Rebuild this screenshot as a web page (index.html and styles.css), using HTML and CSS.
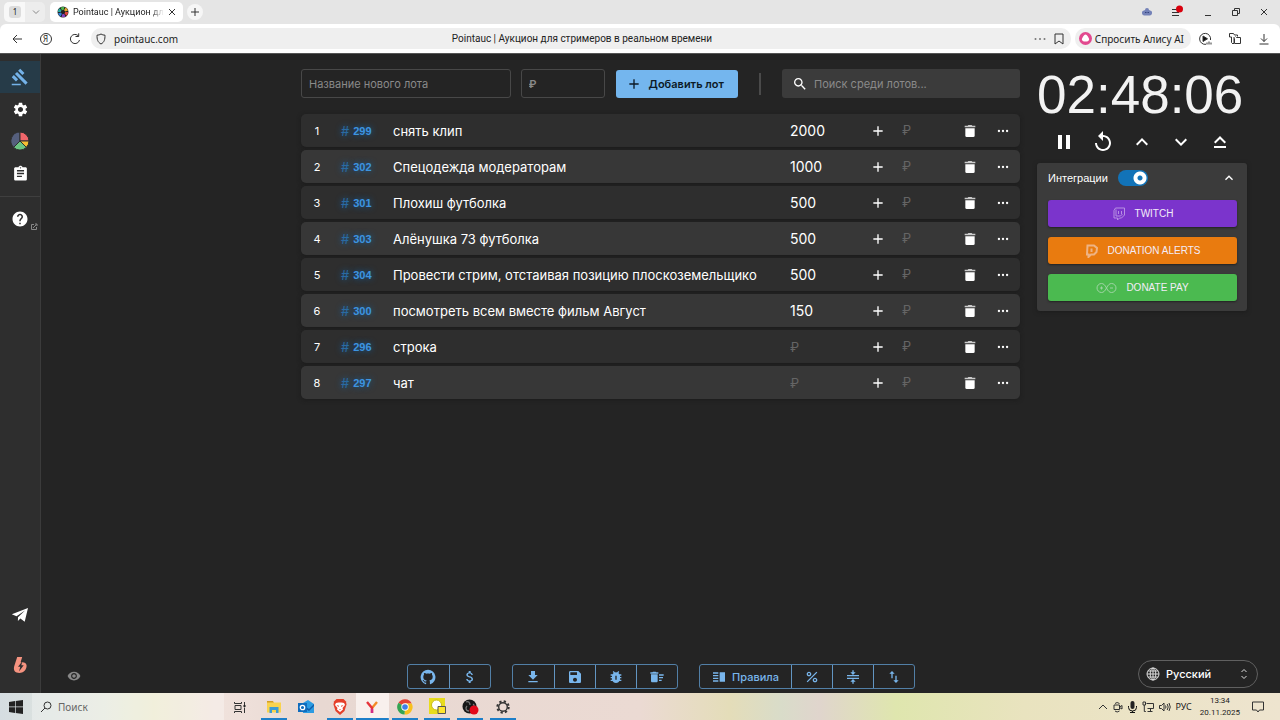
FILE: index.html
```html
<!DOCTYPE html>
<html lang="ru">
<head>
<meta charset="UTF-8">
<meta name="viewport" content="width=device-width, initial-scale=1.0">
<title>Pointauc | Аукцион для стримеров в реальном времени</title>
<link rel="stylesheet" href="styles.css">
</head>

<body>
<svg class="sprite" aria-hidden="true">
    <symbol id="add" viewBox="0 0 24 24"><path d="M19 13h-6v6h-2v-6H5v-2h6V5h2v6h6z"/></symbol>
    <symbol id="trash" viewBox="0 0 24 24"><path d="M5 8h14v11a2 2 0 0 1-2 2H7a2 2 0 0 1-2-2z"/><path opacity=".75" d="M4 4h4.500l1-1h5l1 1H20v2.500H4z"/></symbol>
    <symbol id="more" viewBox="0 0 24 24"><circle cx="5" cy="12" r="2"/><circle cx="12" cy="12" r="2"/><circle cx="19" cy="12" r="2"/></symbol>
    <symbol id="up" viewBox="0 0 24 24"><path d="m12 8-6 6 1.410 1.410L12 10.830l4.590 4.580L18 14z"/></symbol>
    <symbol id="down" viewBox="0 0 24 24"><path d="M16.590 8.590 12 13.170 7.410 8.590 6 10l6 6 6-6z"/></symbol>
    <symbol id="search" viewBox="0 0 24 24"><path d="M15.500 14h-.790l-.280-.270C15.410 12.590 16 11.110 16 9.500 16 5.910 13.090 3 9.500 3S3 5.910 3 9.500 5.910 16 9.500 16c1.610 0 3.090-.590 4.230-1.570l.270.280v.790l5 4.990L20.490 19zm-6 0C7.010 14 5 11.990 5 9.500S7.010 5 9.500 5 14 7.010 14 9.500 11.990 14 9.500 14z"/></symbol>
</svg>

<header class="browser">
    <div class="tabs">
        <div class="tab-group">
            <button class="tab-count">1</button>
            <button class="bare" aria-label="Группы"><svg class="line faint" width="10" height="10" viewBox="0 0 10 10"><path d="M2 3.500 5 6.500l3-3"/></svg></button>
        </div>
        <div class="tab">
            <svg width="12" height="12" viewBox="0 0 12 12">
                <circle cx="6" cy="6" r="5.500" fill="#222"/>
                <g fill="none" stroke-width="3" stroke-dasharray="2.800 30">
                    <circle cx="6" cy="6" r="3.600" stroke="#e0453c"/>
                    <circle cx="6" cy="6" r="3.600" stroke="#8a3fc0" transform="rotate(60 6 6)"/>
                    <circle cx="6" cy="6" r="3.600" stroke="#2d7fd8" transform="rotate(120 6 6)"/>
                    <circle cx="6" cy="6" r="3.600" stroke="#27a8a0" transform="rotate(180 6 6)"/>
                    <circle cx="6" cy="6" r="3.600" stroke="#4db84c" transform="rotate(240 6 6)"/>
                    <circle cx="6" cy="6" r="3.600" stroke="#e5a52d" transform="rotate(300 6 6)"/>
                </g>
            </svg>
            <span class="tab-title">Pointauc | Аукцион для</span>
            <button class="bare" aria-label="Закрыть вкладку"><svg class="line" width="8" height="8" viewBox="0 0 8 8"><path d="m1 1 6 6M7 1 1 7"/></svg></button>
        </div>
        <button class="new-tab" aria-label="Новая вкладка"><svg class="line" width="10" height="10" viewBox="0 0 10 10"><path d="M5 1v8M1 5h8"/></svg></button>
        <div class="window-buttons">
            <button class="bare" aria-label="Расширение"><svg width="10" height="10" viewBox="0 0 10 10"><path d="M3 3a2 2 0 0 1 4 0l1 .500a2.500 2.500 0 0 1-1 5H3a2.500 2.500 0 0 1-1-5z" fill="#7482b8"/><path d="M3 5.500h1.500M5.500 5.500H7" stroke="#34447e"/></svg></button>
            <button class="bare" aria-label="Меню"><svg class="line" width="14" height="14" viewBox="0 0 14 14"><path d="M2 4.500h5M2 7.500h7M2 10.500h7"/><circle cx="9.500" cy="4" r="3.500" fill="#d9000d" stroke="none"/></svg></button>
            <button class="bare" aria-label="Свернуть"><svg class="line" width="10" height="10" viewBox="0 0 10 10"><path d="M2 8.500h6"/></svg></button>
            <button class="bare" aria-label="Развернуть"><svg class="line" width="10" height="10" viewBox="0 0 10 10"><path d="M1.500 3.500h5v5h-5zM3.500 3.500v-2h5v5h-2"/></svg></button>
            <button class="bare" aria-label="Закрыть"><svg class="line" width="10" height="10" viewBox="0 0 10 10"><path d="m2 2 6 6M8 2 2 8"/></svg></button>
        </div>
    </div>
    <div class="address-bar">
        <button class="nav-button" aria-label="Назад"><svg class="line" width="12" height="12" viewBox="0 0 12 12"><path d="M11 6H2M6 2 2 6l4 4"/></svg></button>
        <button class="nav-button yandex" aria-label="Яндекс"><span>Я</span></button>
        <button class="nav-button" aria-label="Обновить"><svg class="line" width="12" height="12" viewBox="0 0 12 12"><path d="M9.500 3a4.600 4.600 0 1 0 1 4M6.500 3.500h3.200V.300"/></svg></button>
        <div class="address">
            <svg class="line" width="10" height="12" viewBox="0 0 10 12"><path d="M5 1c1.200.800 2.500 1.200 4 1.200 0 4-.500 7-4 8.800C1.500 9.200 1 6.200 1 2.200 2.500 2.200 3.800 1.800 5 1z"/></svg>
            <span class="url">pointauc.com</span>
            <span class="page-title">Pointauc | Аукцион для стримеров в реальном времени</span>
            <svg class="dots" width="12" height="12" viewBox="0 0 12 12"><circle cx="1.500" cy="6" r="1"/><circle cx="6" cy="6" r="1"/><circle cx="10.500" cy="6" r="1"/></svg>
            <svg class="line" width="10" height="12" viewBox="0 0 10 12"><path d="M1 1h8v10L5 8l-4 3z"/></svg>
        </div>
        <button class="alice">
            <svg width="13" height="13" viewBox="0 0 13 13"><circle cx="6.500" cy="6.500" r="6.500" fill="#e2498f"/><path d="M6.500 2.500c1.300 0 3.800 3.800 3.600 5.200-.200 1.300-2 1.800-3.600 1.800s-3.400-.500-3.600-1.800C2.700 6.300 5.200 2.500 6.500 2.500z" fill="#fff"/></svg>
            Спросить Алису AI
        </button>
        <div class="address-tools">
            <button class="bare" aria-label="Видео"><svg class="line" width="14" height="14" viewBox="0 0 14 14"><path d="M8 12.300A5.500 5.500 0 1 1 12.500 8"/><path d="M5 4v5.500L9.500 6.800z" fill="#111"/><path d="M9 12.500v-2M11 12.500v-3M13 12.500v-2"/></svg></button>
            <button class="bare" aria-label="Коллекции"><svg class="line" width="14" height="14" viewBox="0 0 14 14"><path d="M1.500 1.500h4l1 1.500h3v1.500M1.500 1.500v3.500h2v5.500l1.500 1.500 1-1V5M6.500 6.500v5h6v-6h-4l-1-1"/></svg></button>
            <button class="bare" aria-label="Загрузки"><svg class="line" width="12" height="12" viewBox="0 0 12 12"><path d="M6 1v7.500M3 5.500l3 3 3-3M1.500 11h9"/></svg></button>
        </div>
    </div>
</header>

<div class="app">
    <nav class="sidebar">
        <a class="side-link active" href="#" aria-label="Аукцион"><svg width="18" height="18" viewBox="0 0 24 24"><path d="M1 21h12v2H1zM5.245 8.070l2.830-2.827 14.140 14.142-2.828 2.828zM12.317 1l5.657 5.656-2.830 2.830-5.654-5.660zM3.825 9.485l5.657 5.657-2.828 2.828-5.657-5.657z"/></svg></a>
        <a class="side-link" href="#" aria-label="Настройки"><svg width="17" height="17" viewBox="0 0 24 24"><path d="M19.140 12.940c.040-.300.060-.610.060-.940 0-.320-.020-.640-.070-.940l2.030-1.580c.180-.140.230-.410.120-.610l-1.920-3.320c-.120-.220-.370-.290-.590-.220l-2.390.960c-.500-.380-1.030-.700-1.620-.940l-.360-2.540c-.040-.240-.240-.410-.480-.410h-3.840c-.240 0-.430.170-.470.410l-.360 2.540c-.590.240-1.130.570-1.620.940l-2.390-.960c-.220-.080-.470 0-.590.220L2.740 8.870c-.120.210-.080.470.120.610l2.030 1.580c-.050.300-.090.630-.090.940s.020.640.070.940l-2.030 1.580c-.180.140-.230.410-.120.610l1.920 3.320c.120.220.370.290.590.220l2.390-.960c.500.380 1.030.700 1.620.940l.360 2.540c.050.240.240.410.480.410h3.840c.240 0 .440-.170.470-.410l.360-2.540c.590-.240 1.130-.560 1.620-.940l2.390.960c.220.080.470 0 .590-.220l1.920-3.320c.120-.220.070-.470-.120-.610zM12 15.600c-1.980 0-3.600-1.620-3.600-3.600s1.620-3.600 3.600-3.600 3.600 1.620 3.600 3.600-1.620 3.600-3.600 3.600z"/></svg></a>
        <a class="side-link" href="#" aria-label="Колесо"><svg width="20" height="20" viewBox="0 0 20 20" stroke="#2e2e2e"><path fill="#555f7d" d="M10 10V1a9 9 0 0 0-6.400 15.400z"/><path fill="#f0666a" d="M10 10V1a9 9 0 0 1 9 9z"/><path fill="#f5bd33" d="M10 10h9a9 9 0 0 1-2.600 6.400z"/><path fill="#6cc584" d="m10 10 6.400 6.400a9 9 0 0 1-12.800 0z"/></svg></a>
        <a class="side-link" href="#" aria-label="История"><svg width="17" height="17" viewBox="0 0 24 24"><path d="M19 3h-4.180C14.400 1.840 13.300 1 12 1c-1.300 0-2.400.840-2.820 2H5c-1.100 0-2 .900-2 2v15c0 1.100.900 2 2 2h14c1.100 0 2-.900 2-2V5c0-1.100-.900-2-2-2zm-7 0c.550 0 1 .450 1 1s-.450 1-1 1-1-.450-1-1 .450-1 1-1zm2 14H7v-2h7v2zm3-4H7v-2h10v2zm0-4H7V7h10v2z"/></svg></a>
        <hr class="side-line">
        <a class="side-link" href="#" aria-label="Помощь">
            <svg width="18" height="18" viewBox="0 0 24 24"><path d="M12 2C6.480 2 2 6.480 2 12s4.480 10 10 10 10-4.480 10-10S17.520 2 12 2zm1 17h-2v-2h2v2zm2.070-7.750-.900.920C13.450 12.900 13 13.500 13 15h-2v-.500c0-1.100.450-2.100 1.170-2.830l1.240-1.260c.370-.360.590-.860.590-1.410 0-1.100-.900-2-2-2s-2 .900-2 2H8c0-2.210 1.790-4 4-4s4 1.790 4 4c0 .880-.360 1.680-.930 2.250z"/></svg>
            <svg class="external" width="8" height="8" viewBox="0 0 8 8"><path d="M4 1.500H1.500v5h5V4M3 5l3.500-3.500M5 1h2v2"/></svg>
        </a>
        <div class="side-bottom">
            <a class="side-link" href="#" aria-label="Telegram"><svg width="18" height="18" viewBox="0 0 18 18"><path d="M17 2 .800 8.300l4.700 1.900L14 4.500l-7 6.700-.100 3.800 2.500-2.500 4.300 3.200z"/></svg></a>
            <a class="side-link" href="#" aria-label="Boosty"><svg width="16" height="18" viewBox="0 0 16 18"><path fill="#f59380" d="M5.200 1h5L8.600 6.300h2.200c3 .200 4.300 2 3.700 4.800-.800 3.700-3.300 5.900-7 5.900-4.500 0-6.400-2.500-5.300-6.700z"/><path fill="#2e2e2e" d="M10.500 5 6 10.700h2.300L7 15.500l4.700-6.300H9.300z"/></svg></a>
        </div>
    </nav>

    <main class="page">
        <div class="auction">
            <section class="lots">
                <form class="new-lot">
                    <input class="field lot-name" type="text" placeholder="Название нового лота" aria-label="Название нового лота">
                    <input class="field lot-price" type="text" placeholder="₽" aria-label="Сумма">
                    <button class="add-lot" type="button"><svg width="16" height="16"><use href="#add"/></svg>Добавить лот</button>
                    <span class="divider"></span>
                    <label class="search">
                        <svg width="16" height="16"><use href="#search"/></svg>
                        <input type="text" placeholder="Поиск среди лотов..." aria-label="Поиск среди лотов">
                    </label>
                </form>
                <ol class="lot-list" id="lot-list"></ol>
            </section>

            <aside class="tools">
                <div class="timer">02:48:06</div>
                <div class="timer-buttons">
                    <button class="bare" aria-label="Пауза"><svg width="24" height="24" viewBox="0 0 24 24"><path d="M6 19h4V5H6v14zm8-14v14h4V5h-4z"/></svg></button>
                    <button class="bare" aria-label="Сбросить"><svg width="24" height="24" viewBox="0 0 24 24"><path d="M12 5V1L7 6l5 5V7c3.310 0 6 2.690 6 6s-2.690 6-6 6-6-2.690-6-6H4c0 4.420 3.580 8 8 8s8-3.580 8-8-3.580-8-8-8z"/></svg></button>
                    <button class="bare" aria-label="Добавить минуту"><svg width="24" height="24"><use href="#up"/></svg></button>
                    <button class="bare" aria-label="Убавить минуту"><svg width="24" height="24"><use href="#down"/></svg></button>
                    <button class="bare" aria-label="Добавить две минуты"><svg width="24" height="24" viewBox="0 0 24 24"><path d="m12 6-6 6 1.400 1.400L12 8.900l4.600 4.500L18 12zM6 16h12v2H6z"/></svg></button>
                </div>
                <div class="integrations">
                    <div class="integrations-head">
                        <label for="integrations">Интеграции</label>
                        <input class="switch" type="checkbox" id="integrations" checked>
                        <button class="bare" aria-label="Скрыть"><svg width="16" height="16"><use href="#up"/></svg></button>
                    </div>
                    <button class="service twitch">
                        <svg width="14" height="14" viewBox="0 0 14 14"><path d="M3.500 1h9v7l-3 3h-2l-2 2v-2H2V3.500zM6.500 4v3M9.500 4v3M4 9h4.500l2-2M4 2.500v6.500"/></svg>TWITCH
                    </button>
                    <button class="service alerts">
                        <svg width="14" height="14" viewBox="0 0 14 14"><path d="M2.500 1.500H9l3 2.500-.500 4-2.500 2.500H6L3.500 13v-2.500H2zM6.500 4.500v3.500"/></svg>DONATION ALERTS
                    </button>
                    <button class="service pay">
                        <svg width="21" height="12" viewBox="0 0 21 12"><path d="M10.500 6C9 3 7.500 1.500 5.500 1.500a4.500 4.500 0 0 0 0 9C7.500 10.500 9 9 10.500 6s3-4.500 5-4.500a4.500 4.500 0 0 1 0 9C13.500 10.500 12 9 10.500 6M4 6h3M5.500 4.500v3M14 6h3"/></svg>DONATE PAY
                    </button>
                </div>
            </aside>
        </div>

        <footer class="bottom">
            <button class="bare eye" aria-label="Показать"><svg width="14" height="14" viewBox="0 0 24 24"><path d="M12 4.500C7 4.500 2.730 7.610 1 12c1.730 4.390 6 7.500 11 7.500s9.270-3.110 11-7.500c-1.730-4.390-6-7.500-11-7.500zM12 17c-2.760 0-5-2.240-5-5s2.240-5 5-5 5 2.240 5 5-2.240 5-5 5zm0-8c-1.660 0-3 1.340-3 3s1.340 3 3 3 3-1.340 3-3-1.340-3-3-3z"/></svg></button>
            <div class="groups">
                <div class="group">
                    <button aria-label="GitHub"><svg width="16" height="16" viewBox="0 0 24 24"><path d="M12 1.270a11 11 0 0 0-3.480 21.460c.550.090.730-.280.730-.550v-1.840c-3.030.640-3.670-1.460-3.670-1.460-.550-1.290-1.280-1.650-1.280-1.650-.920-.650.100-.650.100-.650 1.100 0 1.730 1.100 1.730 1.100.920 1.650 2.570 1.200 3.210.920a2 2 0 0 1 .640-1.470c-2.470-.270-5.040-1.190-5.040-5.500 0-1.100.460-2.100 1.200-2.840a3.760 3.760 0 0 1 0-2.930s.910-.280 3.110 1.100c1.800-.490 3.700-.490 5.500 0 2.100-1.380 3.020-1.100 3.020-1.100a3.760 3.760 0 0 1 .100 2.930c.830.740 1.200 1.740 1.200 2.940 0 4.210-2.570 5.130-5.040 5.400.450.370.820.920.820 2.020v3.030c0 .270.100.640.730.550A11 11 0 0 0 12 1.270"/></svg></button>
                    <button aria-label="Поддержать"><svg width="16" height="16" viewBox="0 0 24 24"><path d="M11.800 10.900c-2.270-.590-3-1.200-3-2.150 0-1.090 1.010-1.850 2.700-1.850 1.780 0 2.440.850 2.500 2.100h2.210c-.070-1.720-1.120-3.300-3.210-3.810V3h-3v2.160c-1.940.420-3.500 1.680-3.500 3.610 0 2.310 1.910 3.460 4.700 4.130 2.500.600 3 1.480 3 2.410 0 .690-.490 1.790-2.700 1.790-2.060 0-2.870-.920-2.980-2.100h-2.200c.120 2.190 1.760 3.420 3.680 3.830V21h3v-2.150c1.950-.370 3.500-1.500 3.500-3.550 0-2.840-2.430-3.810-4.700-4.400z"/></svg></button>
                </div>
                <div class="group">
                    <button aria-label="Скачать"><svg width="16" height="16" viewBox="0 0 24 24"><path d="M19 9h-4V3H9v6H5l7 7zM5 18v2h14v-2z"/></svg></button>
                    <button aria-label="Сохранить"><svg width="16" height="16" viewBox="0 0 24 24"><path d="M17 3H5c-1.110 0-2 .900-2 2v14c0 1.100.890 2 2 2h14c1.100 0 2-.900 2-2V7zm-5 16c-1.660 0-3-1.340-3-3s1.340-3 3-3 3 1.340 3 3-1.340 3-3 3zm3-10H5V5h10z"/></svg></button>
                    <button aria-label="Ошибка"><svg width="16" height="16" viewBox="0 0 24 24"><path d="M20 8h-2.810c-.450-.780-1.070-1.450-1.820-1.960L17 4.410 15.590 3l-2.170 2.170C12.960 5.060 12.490 5 12 5s-.960.060-1.410.170L8.410 3 7 4.410l1.620 1.630C7.880 6.550 7.260 7.220 6.810 8H4v2h2.090c-.050.330-.090.660-.090 1v1H4v2h2v1c0 .340.040.670.090 1H4v2h2.810c1.040 1.790 2.970 3 5.190 3s4.150-1.210 5.190-3H20v-2h-2.090c.050-.330.090-.660.090-1v-1h2v-2h-2v-1c0-.340-.040-.670-.090-1H20zm-7 8h-2v-6h2z"/></svg></button>
                    <button aria-label="Очистить"><svg width="16" height="16" viewBox="0 0 24 24"><path d="M15 16h4v2h-4zm0-8h7v2h-7zm0 4h6v2h-6zM3 18c0 1.100.900 2 2 2h6c1.100 0 2-.900 2-2V8H3zM14 5h-3l-1-1H6L5 5H2v2h12z"/></svg></button>
                </div>
                <div class="group">
                    <button class="rules"><svg width="16" height="16" viewBox="0 0 24 24"><path d="M3 15h8v-2H3zm0 4h8v-2H3zm0-8h8V9H3zm0-6v2h8V5zm10 0h8v14h-8z"/></svg>Правила</button>
                    <button aria-label="Проценты"><svg width="16" height="16" viewBox="0 0 24 24"><path d="M7.500 11C9.430 11 11 9.430 11 7.500S9.430 4 7.500 4 4 5.570 4 7.500 5.570 11 7.500 11zm0-5C8.330 6 9 6.670 9 7.500S8.330 9 7.500 9 6 8.330 6 7.500 6.670 6 7.500 6zM4 18.600 18.600 4 20 5.400 5.400 20zM16.500 13c-1.930 0-3.500 1.570-3.500 3.500s1.570 3.500 3.500 3.500 3.500-1.570 3.500-3.500-1.570-3.500-3.500-3.500zm0 5c-.830 0-1.500-.670-1.500-1.500s.670-1.500 1.500-1.500 1.500.670 1.500 1.500-.670 1.500-1.500 1.500z"/></svg></button>
                    <button aria-label="Сжать"><svg width="16" height="16" viewBox="0 0 24 24"><path d="M8 19h3v3h2v-3h3l-4-4zm8-14h-3V2h-2v3H8l4 4zM3 9v2h18V9zm0 4v2h18v-2z"/></svg></button>
                    <button aria-label="Сортировать"><svg width="16" height="16" viewBox="0 0 24 24"><path d="M9 3 5 6.990h3V14h2V6.990h3zm7 14.010V10h-2v7.010h-3L15 21l4-3.990z"/></svg></button>
                </div>
            </div>
            <label class="language">
                <svg class="globe" width="14" height="14" viewBox="0 0 14 14"><circle cx="7" cy="7" r="6"/><ellipse cx="7" cy="7" rx="2.800" ry="6"/><path d="M1 7h12M2 4h10M2 10h10M7 1v12"/></svg>
                <select aria-label="Язык"><option>Русский</option><option>English</option></select>
                <svg class="globe" width="8" height="12" viewBox="0 0 8 12"><path d="M1.500 4 4 1.500 6.500 4M1.500 8 4 10.500 6.500 8"/></svg>
            </label>
        </footer>
    </main>
</div>

<div class="taskbar">
    <button class="start" aria-label="Пуск"><svg width="14" height="14" viewBox="0 0 14 14"><path d="M0 2l6-1v5.500H0zM6.700.900 14 0v6.500H6.700zM0 7.300h6v5.600L0 12zM6.700 7.300H14V14l-7.300-1z"/></svg></button>
    <label class="task-search">
        <svg class="line" width="12" height="12" viewBox="0 0 12 12"><circle cx="7.500" cy="4.500" r="3.500"/><path d="M5 7 1 11"/></svg>
        <input type="text" placeholder="Поиск" aria-label="Поиск">
    </label>
    <button class="task-view" aria-label="Представление задач"><svg class="line" width="12" height="12" viewBox="0 0 12 12"><path d="M.500 1v1.500h7V1M1 4.500h6v4H1zM.500 12v-1.500h7V12M10.500 1v3M10.500 6.500V12"/><path d="M9.500 4h2v2h-2z" fill="#222" stroke="none"/></svg></button>
    <div class="task-apps">
        <button class="running" aria-label="Проводник"><svg width="16" height="16" viewBox="0 0 16 16"><path fill="#d39e27" d="M1 2h6l1 2H1z"/><path fill="#f9d34e" d="M1 3.500h14v10H1z"/><path fill="#3d9bd4" d="M3.500 8h9v6H10v-3H6v3H3.500z"/></svg></button>
        <button aria-label="Outlook"><svg width="17" height="16" viewBox="0 0 17 16"><path fill="#2b9be2" d="M5 4l5-3 6 4v9H5z"/><path fill="#125ca8" d="m5 6 6 4 5-5v2l-5 5-6-4z"/><path fill="#0f6cbd" d="M0 4h9v9H0z"/><circle cx="4.500" cy="8.500" r="2.200" fill="none" stroke="#fff" stroke-width="1.300"/></svg></button>
        <button class="running" aria-label="Brave"><svg width="14" height="16" viewBox="0 0 14 16"><path fill="#e5402a" d="M3.500 0h7L13 2.500l.500 3L11.500 12 7 16l-4.500-4L.500 5.500l.500-3z"/><path fill="#fff" d="m3 4 2.500-.500h3L11 4l1 2-2.500 3 .500 1.500L7 13l-3-2.500L4.500 9 2 6z"/><path fill="#e5402a" d="m3.500 6 2.500.800-.500 1.200zM10.500 6 8 6.800 8.500 8zM6 10h2l-1 1z"/></svg></button>
        <button class="running current" aria-label="Yandex"><svg class="hollow" width="14" height="14" viewBox="0 0 14 14" stroke-width="2.400"><path stroke="#f28a26" d="m12 2-5 6"/><path stroke="#e5343b" d="m2 2 5 6v5"/><path stroke="#cf2d86" d="M7 9v4"/></svg></button>
        <button class="running" aria-label="Chrome"><svg width="16" height="16" viewBox="0 0 16 16"><path fill="#e54335" d="M8 8 1.500 3.800a7.500 7.500 0 0 1 13.200.700H8z"/><path fill="#f8c01d" d="M8 8V4.500h6.700A7.500 7.500 0 0 1 7.500 15.500z"/><path fill="#33a452" d="m8 8-.500 7.500A7.500 7.500 0 0 1 1.500 3.800z"/><circle cx="8" cy="8" r="3.700" fill="#fff"/><circle cx="8" cy="8" r="2.800" fill="#3f7fe8"/></svg></button>
        <button class="running" aria-label="Яндекс Музыка"><svg width="17" height="17" viewBox="0 0 17 17"><path fill="#e8dc1d" d="M0 0h16v16H0z"/><circle cx="7.500" cy="7" r="5" fill="#fff" stroke="#c9bd18"/><path d="M9 8.500h7.500v7H9z" fill="#ffe62e" stroke="#555"/></svg></button>
        <button class="running" aria-label="OBS"><svg width="17" height="16" viewBox="0 0 17 16"><circle cx="7.500" cy="7.500" r="7" fill="#171717"/><path d="M4 3c2-1 4 0 4 3M11 5c2 1 1 4-2 4M7 12c-3 0-4-3-2-5" fill="none" stroke="#777" stroke-width="1.300"/><circle cx="12" cy="11" r="4.500" fill="#e3091a"/></svg></button>
        <button class="running" aria-label="Параметры"><svg class="hollow" width="14" height="14" viewBox="0 0 14 14" stroke="#333"><circle cx="7" cy="7" r="5.700" stroke-width="2" stroke-dasharray="2.240 2.240"/><circle cx="7" cy="7" r="4.300" stroke-width="1.400"/></svg></button>
    </div>
    <div class="tray">
        <svg class="line" width="10" height="10" viewBox="0 0 10 10"><path d="m1 7 4-4 4 4"/></svg>
        <svg class="line" width="10" height="12" viewBox="0 0 10 12"><path d="M1 4h5.500v4.500H1zM6.500 6 9 4.500V8L6.500 6.500M2 2.500q2-2 4.500 0M2 10q2 2 4.500 0"/></svg>
        <svg width="9" height="12" viewBox="0 0 9 12"><rect x="2.500" width="4" height="8" rx="2"/><path d="M.500 5v1.500a4 3.500 0 0 0 8 0V5M4.500 10v2M2 11.500h5" fill="none" stroke="#111"/></svg>
        <svg class="line" width="12" height="12" viewBox="0 0 12 12"><path d="M4.500 2.500h7v5h-6M8.500 7.500v3M5.500 10.500h5M1 1h2.500v3H1zM2.300 4v6.500h1.500"/></svg>
        <svg class="line" width="12" height="12" viewBox="0 0 12 12"><path d="M.500 4.500h2L5 2v8L2.500 7.500h-2zM6.500 4.500q1 1.500 0 3M8.200 3q2 3 0 6M10 2q2.500 4 0 8"/></svg>
        <span class="layout">РУС</span>
        <div class="clock"><span>13:34</span><span>20.11.2025</span></div>
        <button class="bare" aria-label="Уведомления"><svg class="line" width="12" height="12" viewBox="0 0 12 12"><path d="M.500 1h11v8h-4L6 11 4.500 9h-4z"/></svg></button>
    </div>
</div>

<script>
    const lots = [
        { id: 299, name: 'снять клип', amount: 2000 },
        { id: 302, name: 'Спецодежда модераторам', amount: 1000 },
        { id: 301, name: 'Плохиш футболка', amount: 500 },
        { id: 303, name: 'Алёнушка 73 футболка', amount: 500 },
        { id: 304, name: 'Провести стрим, отстаивая позицию плоскоземельщиков', amount: 500 },
        { id: 300, name: 'посмотреть всем вместе фильм Август', amount: 150 },
        { id: 296, name: 'строка', amount: '' },
        { id: 297, name: 'чат', amount: '' }
    ];

    document.getElementById('lot-list').innerHTML = lots.map((lot, index) => `
        <li class="lot">
            <span class="position">${index + 1}</span>
            <span class="lot-id"><span class="hash">#</span>${lot.id}</span>
            <input class="name" type="text" value="${lot.name}" aria-label="Название лота">
            <input class="amount" type="text" value="${lot.amount}" placeholder="₽" aria-label="Сумма лота">
            <button class="bare plus" aria-label="Добавить"><svg width="16" height="16"><use href="#add"/></svg></button>
            <input class="extra" type="text" placeholder="₽" aria-label="Добавить к сумме">
            <button class="bare" aria-label="Удалить"><svg width="16" height="16"><use href="#trash"/></svg></button>
            <button class="bare" aria-label="Ещё"><svg width="14" height="14"><use href="#more"/></svg></button>
        </li>`).join('');
</script>

</body>
</html>
```
FILE: styles.css
```css
* {
    box-sizing: border-box;
}
body {
    margin: 0;
    min-height: 100vh;
    display: flex;
    flex-direction: column;
    background-color: #242424;
    color: #fff;
    font-family: Inter, "Liberation Sans", sans-serif;
    font-size: 11px;
}
button, input, select {
    font: inherit;
    color: inherit;
    margin: 0;
    padding: 0;
    border: none;
    background: none;
    min-width: 0;
}
svg {
    display: block;
    flex: none;
    fill: currentColor;
}
.sprite {
    position: absolute;
    width: 0;
    height: 0;
}
.hollow {
    fill: none;
}
.line {
    fill: none;
    stroke: #333;
}
.faint {
    stroke: #888;
}
.bare {
    display: flex;
    align-items: center;
    justify-content: center;
}

/* browser */
.browser {
    background-color: #e5e5e5;
    color: #222;
    font-family: "Noto Sans", sans-serif;
    font-size: 10px;
    border-bottom: 1px solid #555;
}
.tabs {
    display: flex;
    align-items: center;
    height: 24px;
    padding: 0 11px 0 4px;
}
.tab-group {
    display: flex;
    align-items: center;
    gap: 6px;
    width: 41px;
    height: 20px;
    padding-left: 5px;
    border-radius: 5px;
    background: linear-gradient(90deg, #f8f8f8 21px, #ededed 21px);
}
.tab-count {
    width: 12px;
    height: 12px;
    border-radius: 3px;
    background-color: #dcdcdc;
    font-size: 8px;
    line-height: 12px;
}
.tab-group .bare {
    width: 18px;
}
.tab {
    display: flex;
    align-items: center;
    gap: 4px;
    width: 133px;
    height: 20px;
    margin-left: 5px;
    padding: 0 7px;
    border-radius: 5px;
    background-color: #fff;
}
.tab-title {
    flex: 1;
    overflow: hidden;
    white-space: nowrap;
    font-family: Roboto, sans-serif;
    font-size: 9px;
    -webkit-mask-image: linear-gradient(90deg, #000 85%, transparent);
    mask-image: linear-gradient(90deg, #000 85%, transparent);
}
.new-tab {
    display: flex;
    align-items: center;
    justify-content: center;
    width: 16px;
    height: 16px;
    margin-left: 4px;
    border-radius: 50%;
    background-color: #f6f6f6;
}
.window-buttons, .address-tools {
    display: flex;
    justify-content: space-between;
    align-items: center;
}
.window-buttons {
    width: 127px;
    margin-left: auto;
}
.address-bar {
    display: flex;
    align-items: center;
    height: 29px;
    padding: 0 10px 0 2px;
    border-radius: 6px 6px 0 0;
    background-color: #fff;
}
.nav-button {
    display: flex;
    align-items: center;
    justify-content: center;
    width: 29px;
}
.yandex span {
    width: 12px;
    height: 12px;
    border: 1px solid #333;
    border-radius: 50%;
    font-size: 8px;
    line-height: 10px;
}
.address {
    display: flex;
    align-items: center;
    gap: 8px;
    flex: 1;
    height: 21px;
    margin-left: 2px;
    padding: 0 7px 0 5px;
    border-radius: 10px;
    background-color: #efefef;
}
.address .dots {
    fill: #777;
}
.page-title {
    flex: 1;
    text-align: center;
    padding-right: 48px;
    font-family: Roboto, sans-serif;
}
.alice {
    display: flex;
    align-items: center;
    gap: 3px;
    height: 21px;
    margin-left: 4px;
    padding: 0 7px 0 4px;
    border-radius: 10px;
    background-color: #efefef;
}
.address-tools {
    width: 72px;
    margin-left: 7px;
}

/* layout */
.app {
    flex: 1;
    display: flex;
}
.sidebar {
    display: flex;
    flex-direction: column;
    width: 41px;
    padding: 7px 0 12px;
    background-color: #2e2e2e;
    border-right: 1px solid #3b3b3b;
}
.side-link {
    position: relative;
    display: flex;
    align-items: center;
    justify-content: center;
    height: 32px;
    color: #fff;
}
.side-link.active {
    background-color: #263b48;
    color: #74b2e8;
}
.side-line {
    width: 100%;
    margin: 7px 0 6px;
    border: none;
    border-top: 1px solid #3f3f3f;
}
.external {
    position: absolute;
    right: 2px;
    bottom: 4px;
    fill: none;
    stroke: #888;
}
.side-bottom {
    display: flex;
    flex-direction: column;
    gap: 18px;
    margin-top: auto;
}
.page {
    flex: 1;
    display: flex;
    flex-direction: column;
    justify-content: space-between;
    min-width: 0;
}
.auction {
    display: grid;
    grid-template-columns: minmax(0, 1fr) 210px;
    gap: 17px;
    padding: 15px 33px 0 260px;
}

/* new lot */
.new-lot {
    display: flex;
    align-items: center;
}
.field {
    height: 29px;
    padding: 0 7px;
    border: 1px solid #484848;
    border-radius: 3px;
}
.field::placeholder, .search input::placeholder {
    color: #8a8a8a;
    opacity: 1;
}
.lot-name {
    flex: 1;
}
.lot-price {
    width: 84px;
    margin-left: 10px;
    font-weight: 600;
}
.add-lot {
    display: flex;
    align-items: center;
    gap: 7px;
    height: 28px;
    margin-left: 11px;
    padding: 0 14px 0 10px;
    border-radius: 3px;
    background-color: #74b6ee;
    color: #0c1a26;
    font-weight: 600;
}
.divider {
    width: 2px;
    height: 22px;
    margin: 0 21px;
    background-color: #4a4a4a;
}
.search {
    display: flex;
    align-items: center;
    gap: 6px;
    width: 238px;
    height: 29px;
    padding: 0 10px;
    border-radius: 3px;
    background-color: #3b3b3b;
}
.search input {
    flex: 1;
}

/* lots */
.lot-list {
    display: flex;
    flex-direction: column;
    gap: 3px;
    margin: 16px 0 0;
    padding: 0;
    list-style: none;
}
.lot {
    display: grid;
    grid-template-columns: 32px 60px minmax(0, 1fr) 73px 30px 59px 36px 30px;
    align-items: center;
    height: 33px;
    padding-right: 2px;
    border-radius: 5px;
    background-color: #2e2e2e;
    box-shadow: 0 1px 4px #1c1c1c;
}
.lot:nth-child(even) {
    background-color: #373737;
}
.position {
    text-align: center;
}
.lot-id {
    display: flex;
    align-items: center;
    gap: 4px;
    padding-left: 8px;
    font-family: "Liberation Sans", Arial, sans-serif;
    line-height: 14px;
    font-weight: bold;
    color: #3d94e0;
    text-shadow: 0 0 6px #1463a5;
}
.hash {
    font-family: Inter, sans-serif;
    font-size: 13px;
    font-weight: 400;
    color: #2a6ba3;
}
.name {
    margin-right: 33px;
    font-size: 13px;
}
.amount {
    font-size: 14px;
}
.amount::placeholder, .extra::placeholder {
    color: #656565;
    font-size: 13px;
    opacity: 1;
}
.extra {
    padding-left: 9px;
}

/* timer */
.timer {
    padding-bottom: 3px;
    font-family: "Liberation Sans", Arial, sans-serif;
    font-size: 53px;
    line-height: 51px;
    color: #f2f2f2;
}
.timer-buttons {
    display: flex;
    justify-content: space-around;
    padding: 7px 7px 9px;
}
.integrations {
    display: flex;
    flex-direction: column;
    gap: 10px;
    padding: 0 10px 10px 11px;
    border-radius: 3px;
    background-color: #3b3b3b;
    box-shadow: 0 1px 4px #1c1c1c;
    font-family: "Liberation Sans", Arial, sans-serif;
}
.integrations-head {
    display: flex;
    align-items: center;
    height: 30px;
    margin-bottom: -3px;
}
.integrations-head .bare {
    margin-left: auto;
}
.switch {
    appearance: none;
    width: 30px;
    height: 16px;
    margin-left: 10px;
    border-radius: 8px;
    background: radial-gradient(circle at 22px 8px, #1273b8 2px, #fff 3px, #fff 6px, #1273b8 7px);
}
.service {
    display: flex;
    align-items: center;
    justify-content: center;
    gap: 9px;
    height: 27px;
    border-radius: 3px;
    color: #f3ecf8;
    font-size: 10px;
    box-shadow: 0 1px 2px #222;
}
.service svg {
    fill: none;
    stroke: currentColor;
    opacity: 0.5;
}
.alerts svg {
    stroke-width: 2;
}
.twitch {
    background-color: #7b34cc;
}
.alerts {
    background-color: #e97b0f;
}
.pay {
    background-color: #4bba50;
}

/* bottom bar */
.bottom {
    display: grid;
    grid-template-columns: 1fr auto 1fr;
    align-items: end;
    padding: 0 22px 4px;
}
.eye {
    justify-self: start;
    margin-bottom: 2px;
    padding: 4px;
    color: #888;
}
.groups {
    display: flex;
    gap: 21px;
}
.group {
    display: flex;
    height: 25px;
    border: 1px solid #527fa6;
    border-radius: 3px;
    color: #79b6ec;
}
.group button {
    display: flex;
    align-items: center;
    justify-content: center;
    width: 41px;
}
.group button + button {
    border-left: 1px solid #6295c2;
}
.group .rules {
    gap: 5px;
    width: 91px;
    font-weight: 500;
}
.language {
    justify-self: end;
    display: flex;
    align-items: center;
    gap: 6px;
    width: 120px;
    height: 28px;
    margin-bottom: 1px;
    padding: 0 9px 0 7px;
    border: 1px solid #606060;
    border-radius: 14px;
    font-weight: 500;
}
.language select {
    appearance: none;
    flex: 1;
}
.globe {
    fill: none;
    stroke: #ddd;
}

/* taskbar */
.taskbar {
    display: flex;
    height: 27px;
    color: #222;
    font-family: "Noto Sans", sans-serif;
    background: linear-gradient(90deg, #d5dde1 0, #e3e7dc 8%, #ebe9cc 12%, #f0e2dc 17%, #e8d8d2 25%, #ebdad3 50%, #e4ddb9 57%, #d9dcc9 61%, #e0d5cd 64%, #dfe6ae 70%, #e9e3bf 80%, #eee4cf 100%);
}
.start {
    display: flex;
    align-items: center;
    justify-content: center;
    width: 32px;
}
.task-search {
    display: flex;
    align-items: center;
    gap: 6px;
    width: 192px;
    padding-left: 8px;
    background-color: rgba(255, 255, 255, 0.3);
}
.task-search input {
    width: 120px;
    font-size: 10px;
}
.task-search input::placeholder {
    color: #666;
}
.task-view {
    display: flex;
    align-items: center;
    justify-content: center;
    width: 32px;
}
.task-apps {
    display: flex;
    width: 261px;
    margin-left: 2px;
}
.task-apps button {
    flex: 1;
    display: flex;
    align-items: center;
    justify-content: center;
}
.running {
    background: linear-gradient(#1d7fc9, #1d7fc9) center bottom / 26px 2px no-repeat;
}
.running.current {
    background-color: #f8f0ed;
    background-size: 100% 2px;
}
.tray {
    display: flex;
    align-items: center;
    gap: 5px;
    margin-left: auto;
    padding-right: 16px;
    font-size: 9px;
}
.clock {
    display: flex;
    flex-direction: column;
    align-items: center;
    margin: 0 7px 0 3px;
    font-family: Roboto, sans-serif;
    font-size: 8px;
    line-height: 12px;
}
```
